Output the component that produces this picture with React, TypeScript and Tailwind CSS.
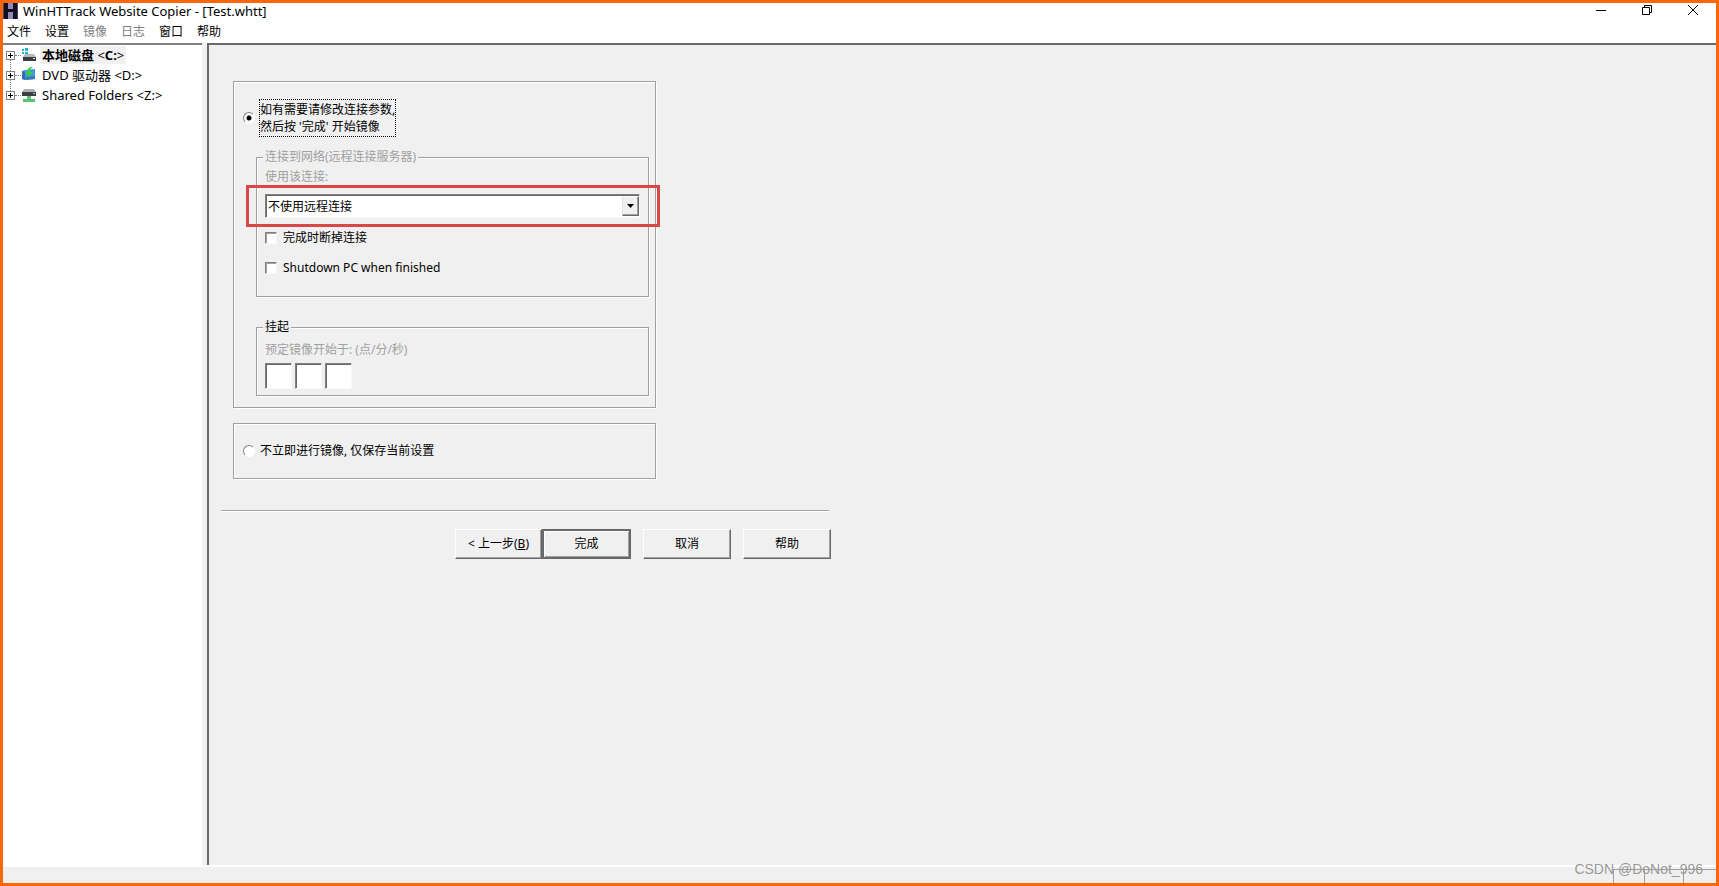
import React, { useState } from "react";

const etched =
  "border border-[#a0a0a0] shadow-[1px_1px_0_#fff,inset_1px_1px_0_#fff]";
const sunken =
  "border border-t-[#808080] border-l-[#808080] border-r-[#f8f8f8] border-b-[#f8f8f8] bg-white shadow-[inset_1px_1px_0_#696969]";
const raised =
  "h-[30px] border border-t-white border-l-white border-r-[#696969] border-b-[#696969] bg-[#f0f0f0] text-center shadow-[inset_-1px_-1px_0_#a0a0a0]";
const radio =
  "size-3 shrink-0 appearance-none rounded-full border border-t-[#808080] border-l-[#808080] border-r-white border-b-white bg-white checked:bg-[radial-gradient(circle,#000_2px,#fff_3px)]";
const checkbox =
  "size-3 shrink-0 appearance-none border border-t-[#808080] border-l-[#808080] border-r-[#f8f8f8] border-b-[#f8f8f8] bg-white shadow-[inset_1px_1px_0_#a0a0a0] checked:bg-[#404040]";

function AppIcon() {
  return (
    <svg width="15" height="16" viewBox="0 0 15 16" aria-hidden="true">
      <path d="M0 0H15V16H0Z" fill="#8f88b8" />
      <path d="M1 0H5V6H10V0H14V16H10V9H5V16H1Z" fill="#120f22" />
      <path d="M0 0H1V16H0ZM14 0H15V16H14Z" fill="#4a4560" />
    </svg>
  );
}

function DriveIcon() {
  return (
    <svg width="16" height="16" viewBox="0 0 16 16" aria-hidden="true">
      <path d="M1 2h2v2H1zM4 1h3v3H4zM1 5h2v2H1zM4 5h3v2H4z" fill="#22b5d0" />
      <path d="M4 7h9l2 3H2z" fill="#b8b8b8" />
      <rect x="2" y="10" width="13" height="4" fill="#3c3f42" />
      <rect x="12" y="11" width="2" height="1" fill="#dfe8df" />
    </svg>
  );
}

function DvdIcon() {
  return (
    <svg width="16" height="16" viewBox="0 0 16 16" aria-hidden="true">
      <path d="M1 4l3-1 10-1v10l-9 1-4-1z" fill="#4a96d8" />
      <path d="M1 4l3 1v8l-3-1z" fill="#2f6fb4" />
      <path d="M4 10l10-1v3l-9 1z" fill="#3a7cc0" />
      <path d="M12 0C8 0 6 2 6 5H4l4 5 4-5H9c0-2 1-4 3-5z" fill="#35d048" />
    </svg>
  );
}

function NetDriveIcon() {
  return (
    <svg width="16" height="16" viewBox="0 0 16 16" aria-hidden="true">
      <path d="M3 2h10l2 3H1z" fill="#b0b0b0" />
      <rect x="1" y="5" width="14" height="4" fill="#3c3f42" />
      <rect x="12" y="6" width="2" height="1" fill="#7ee089" />
      <path d="M6 9h4v3h4v3H2v-3h4z" fill="#5fbf78" />
    </svg>
  );
}

const drives = [
  {
    label: (
      <>
        <b>本地磁盘</b> &lt;<b>C:</b>&gt;
      </>
    ),
    icon: <DriveIcon />,
    selected: true,
  },
  { label: "DVD 驱动器 <D:>", icon: <DvdIcon />, selected: false },
  { label: "Shared Folders <Z:>", icon: <NetDriveIcon />, selected: false },
];

const menus = [
  { label: "文件", disabled: false },
  { label: "设置", disabled: false },
  { label: "镜像", disabled: true },
  { label: "日志", disabled: true },
  { label: "窗口", disabled: false },
  { label: "帮助", disabled: false },
];

function TitleBar() {
  return (
    <header className="flex h-4 items-center justify-between">
      <div className="flex items-center gap-[5px]">
        <AppIcon />
        <h1 className="text-[13px] leading-4">WinHTTrack Website Copier - [Test.whtt]</h1>
      </div>
      <div className="flex gap-[30px] pr-[15px]">
        <button aria-label="最小化" className="h-4 w-4">
          <svg width="16" height="16" stroke="#000"><path d="M3 7.5h10" /></svg>
        </button>
        <button aria-label="还原" className="h-4 w-4">
          <svg width="16" height="16" stroke="#000" fill="none"><path d="M3.5 4.5h7v7h-7zM5.5 4.5v-2h7v7h-2" /></svg>
        </button>
        <button aria-label="关闭" className="h-4 w-4">
          <svg width="16" height="16" stroke="#000"><path d="M3 2l10 10M13 2L3 12" /></svg>
        </button>
      </div>
    </header>
  );
}

function DriveTree() {
  return (
    <aside className="w-[199px] shrink-0 border-t-2 border-[#808080] bg-white text-[13px]">
      <ul>
        {drives.map((d, i) => (
          <li key={i} className="flex h-5 items-center pl-[3px]">
            <div className="relative flex w-[15px] items-center">
              {i < drives.length - 1 && (
                <span className="absolute top-[9px] left-1 h-[11px] border-l border-dotted border-[#808080]" />
              )}
              <button aria-label="展开" className="size-[9px] border border-[#808080] bg-white">
                <svg width="7" height="7" stroke="#000"><path d="M1 3.5h5M3.5 1v5" /></svg>
              </button>
              <span className="grow border-t border-dotted border-[#808080]" />
            </div>
            {d.icon}
            <span className={d.selected ? "ml-[3px] bg-[#f0f0f0] px-[2px] leading-[18px]" : "ml-[3px] px-[2px] leading-[18px]"}>
              {d.label}
            </span>
          </li>
        ))}
      </ul>
    </aside>
  );
}

function ConnectionGroup() {
  return (
    <fieldset className={"mt-3 ml-[22px] mr-[6px] px-2 pb-5 " + etched}>
      <legend className="bg-[#f0f0f0] px-[2px] -ml-[2px] leading-4 text-[#a0a0a0]">连接到网络(远程连接服务器)</legend>
      <label htmlFor="conn" className="block leading-6 text-[#a0a0a0]">使用该连接:</label>
      <div className="relative mt-[5px]">
        <select
          id="conn"
          className={"h-6 w-full appearance-none pt-[2px] pl-[2px] leading-5 " + sunken}
        >
          <option>不使用远程连接</option>
        </select>
        <span className="pointer-events-none absolute top-[2px] right-px flex h-5 w-[17px] items-center justify-center border border-t-white border-l-[#e0e0e0] border-r-[#696969] border-b-[#696969] bg-[#f0f0f0] shadow-[inset_-1px_-1px_0_#a0a0a0]">
          <svg width="7" height="4"><path d="M0 0h7L3.5 4z" /></svg>
        </span>
        <span className="pointer-events-none absolute -top-[9px] -right-[20px] -bottom-[9px] -left-[19px] border-3 border-[#d94848]" />
      </div>
      <label className="mt-3 flex h-4 items-center gap-[6px]">
        <input type="checkbox" className={checkbox} />
        完成时断掉连接
      </label>
      <label className="mt-[14px] flex h-4 items-center gap-[6px]">
        <input type="checkbox" className={checkbox} />
        Shutdown PC when finished
      </label>
    </fieldset>
  );
}

function ScheduleGroup() {
  return (
    <fieldset className={"mt-[22px] ml-[22px] mr-[6px] px-2 pb-[6px] " + etched}>
      <legend className="bg-[#f0f0f0] px-[2px] -ml-[2px] leading-4">挂起</legend>
      <p className="mt-[6px] leading-[18px] text-[#a0a0a0]">预定镜像开始于: (点/分/秒)</p>
      <div className="mt-1 flex gap-[3px]">
        <input aria-label="点" className={"h-[26px] w-[27px] " + sunken} />
        <input aria-label="分" className={"h-[26px] w-[27px] " + sunken} />
        <input aria-label="秒" className={"h-[26px] w-[27px] " + sunken} />
      </div>
    </fieldset>
  );
}

export default function App() {
  const [mode, setMode] = useState("now");
  return (
    <div className="flex min-h-screen flex-col border-3 border-[#ff660a] bg-white font-['Noto_Sans','Noto_Sans_CJK_SC',sans-serif] text-[12px] text-black">
      <TitleBar />
      <nav className="flex h-6 items-center gap-[14px] pt-px pl-1">
        {menus.map((m) => (
          <button key={m.label} disabled={m.disabled} className="leading-4 disabled:text-[#808080]">
            {m.label}
          </button>
        ))}
      </nav>
      <div className="flex grow bg-[#f0f0f0]">
        <DriveTree />
        <main className="ml-[5px] grow border-t-2 border-l-2 border-[#696969] bg-[#f0f0f0] pt-9 pl-3">
          <form className="w-[610px]" onSubmit={(e) => e.preventDefault()}>
            <div className="ml-3 w-[423px]">
              <section className={"pt-[17px] pb-[11px] " + etched}>
                <label className="flex items-center gap-1 pl-[9px]">
                  <input type="radio" name="mode" className={radio} checked={mode === "now"} onChange={() => setMode("now")} />
                  <span className="border border-dotted border-black py-px leading-[17px]">
                    如有需要请修改连接参数,
                    <br />
                    然后按 '完成' 开始镜像
                  </span>
                </label>
                <ConnectionGroup />
                <ScheduleGroup />
              </section>
              <section className={"mt-[15px] py-[17px] " + etched}>
                <label className="flex items-center gap-[5px] pl-[9px] leading-5">
                  <input type="radio" name="mode" className={radio} checked={mode === "later"} onChange={() => setMode("later")} />
                  不立即进行镜像, 仅保存当前设置
                </label>
              </section>
            </div>
            <hr className="mt-[31px] mr-[2px] border-t border-[#a0a0a0] shadow-[0_1px_0_#fff]" />
            <div className="mt-[18px] flex justify-end">
              <button type="button" className={"w-[87px] " + raised}>
                &lt; 上一步(<u>B</u>)
              </button>
              <button type="submit" className="h-[30px] w-[89px] border-2 border-[#696969] bg-[#f0f0f0] shadow-[inset_1px_1px_0_#fff,inset_-1px_-1px_0_#a0a0a0]">
                完成
              </button>
              <button type="button" className={"ml-3 w-[88px] " + raised}>取消</button>
              <button type="button" className={"ml-3 w-[88px] " + raised}>帮助</button>
            </div>
          </form>
        </main>
      </div>
      <footer className="relative flex h-[18px] items-end justify-end border-t-2 border-white bg-[#f0f0f0]">
        <span className="h-[14px] w-[31px] border-t border-l border-[#a0a0a0]" />
        <span className="h-[14px] w-[39px] border-t border-l border-[#a0a0a0]" />
        <span className="h-[14px] w-[33px] border-t border-l border-[#a0a0a0]" />
        <span className="absolute right-[13px] bottom-1 font-['Liberation_Sans',sans-serif] text-[14px] leading-5 text-[#999]">
          CSDN @DoNot_996
        </span>
      </footer>
    </div>
  );
}
